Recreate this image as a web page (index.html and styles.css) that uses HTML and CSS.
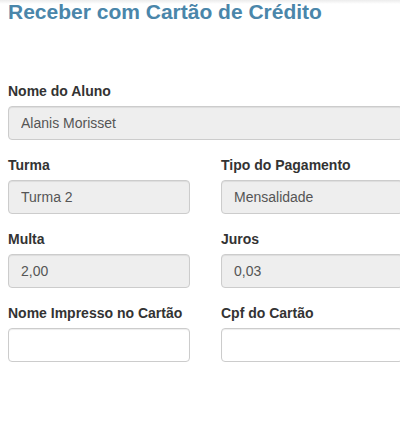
FILE: index.html
```html
<!DOCTYPE html>
<html lang="pt-BR">

<head>
    <meta charset="UTF-8" />
    <meta name="viewport" content="width=device-width, initial-scale=1.0" />
    <title>Receber com Cartão de Crédito</title>
    <link rel="stylesheet" href="styles.css">
</head>

<body>
    <div class="page">
        <h3 class="page-title">Receber com Cartão de Crédito</h3>
        <form class="pay-form">
            <div class="form-group full">
                <label for="aluno">Nome do Aluno</label>
                <input type="text" id="aluno" class="form-control" value="Alanis Morisset" readonly />
            </div>
            <div class="form-group">
                <label for="turma">Turma</label>
                <input type="text" id="turma" class="form-control" value="Turma 2" readonly />
            </div>
            <div class="form-group">
                <label for="tipo">Tipo do Pagamento</label>
                <input type="text" id="tipo" class="form-control" value="Mensalidade" readonly />
            </div>
            <div class="form-group">
                <label for="multa">Multa</label>
                <input type="text" id="multa" class="form-control" value="2,00" readonly />
            </div>
            <div class="form-group">
                <label for="juros">Juros</label>
                <input type="text" id="juros" class="form-control" value="0,03" readonly />
            </div>
            <div class="form-group">
                <label for="nome-cartao">Nome Impresso no Cartão</label>
                <input type="text" id="nome-cartao" class="form-control" />
            </div>
            <div class="form-group">
                <label for="cpf-cartao">Cpf do Cartão</label>
                <input type="text" id="cpf-cartao" class="form-control" />
            </div>
        </form>
    </div>
</body>

</html>
```

FILE: styles.css
```css
html,
body {
    overflow: hidden;
}

body {
    font-family: "Liberation Sans", Arial, sans-serif;
    font-size: 14px;
    line-height: 20px;
    margin: 0;
    padding: 0;
    background: #fff;
    color: #333;
}

.page {
    padding: 0 0 0 8px;
    background: linear-gradient(#ececec, #fff 4px);
}

.page-title {
    font-size: 21px;
    line-height: 24px;
    font-weight: bold;
    color: #4a86aa;
    margin: 0 0 57px;
}

.pay-form {
    width: 395px;
    display: grid;
    grid-template-columns: 1fr 1fr;
    column-gap: 31px;
}

.form-group {
    margin-bottom: 15px;
}

.form-group.full {
    grid-column: 1 / -1;
}

label {
    display: inline-block;
    margin-bottom: 5px;
    font-weight: bold;
}

.form-control {
    display: block;
    box-sizing: border-box;
    width: 100%;
    height: 34px;
    padding: 6px 12px;
    font-family: inherit;
    font-size: 14px;
    color: #555;
    background: #fff;
    border: 1px solid #ccc;
    border-radius: 4px;
    box-shadow: inset 0 1px 1px rgba(0, 0, 0, 0.075);
}

.form-control[readonly] {
    background: #eee;
}
```
